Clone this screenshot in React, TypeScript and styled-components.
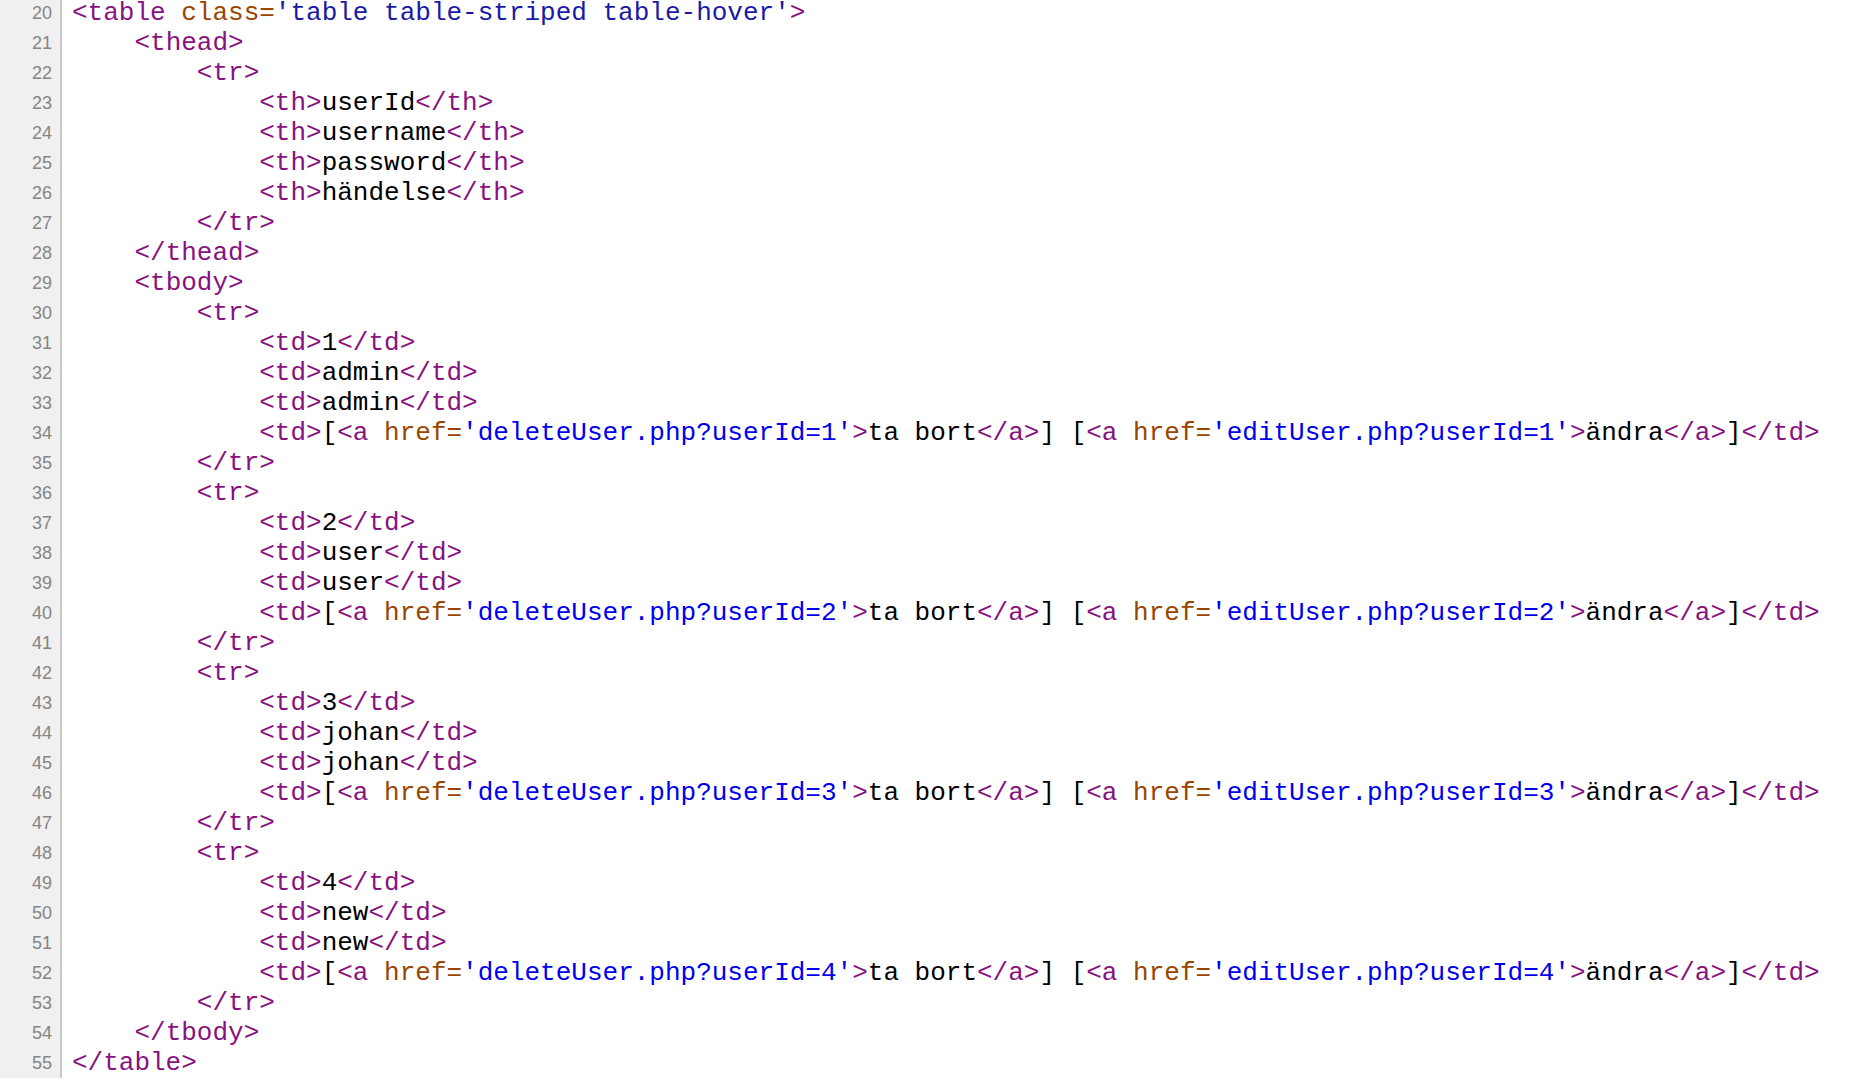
import React from "react";
import styled, { createGlobalStyle } from "styled-components";

const Global = createGlobalStyle`
  html, body { margin: 0; padding: 0; background: #ffffff; overflow: hidden; }
`;

const View = styled.div`
  display: flex;
  margin-top: -2px;
  min-height: 1100px;
`;

const Gutter = styled.div`
  width: 60px;
  flex: none;
  background: #f0f0f0;
  border-right: 2px solid #c9c9c9;
  display: flex;
  flex-direction: column;
`;

const LineNumber = styled.div`
  height: 30px;
  line-height: 30px;
  padding-right: 8px;
  text-align: right;
  font-family: "Liberation Sans", Arial, sans-serif;
  font-size: 18px;
  color: #858585;
`;

const Code = styled.div`
  flex: 1;
  display: flex;
  flex-direction: column;
  padding-left: 10px;
`;

const Line = styled.div`
  height: 30px;
  line-height: 30px;
  white-space: pre;
  font-family: "Liberation Mono", "Courier New", monospace;
  font-size: 26px;
  color: #000000;
`;

const Tag = styled.span`
  color: #881280;
`;
const AttrName = styled.span`
  color: #994500;
`;
const AttrValue = styled.span<{ $link?: boolean }>`
  color: ${(p) => (p.$link ? "#0000ee" : "#1a1aa6")};
`;

const rows = [
  "<table class='table table-striped table-hover'>",
  "    <thead>",
  "        <tr>",
  "            <th>userId</th>",
  "            <th>username</th>",
  "            <th>password</th>",
  "            <th>händelse</th>",
  "        </tr>",
  "    </thead>",
  "    <tbody>",
];
const users = [
  ["1", "admin"],
  ["2", "user"],
  ["3", "johan"],
  ["4", "new"],
];
users.forEach(([id, name]) => {
  rows.push("        <tr>");
  rows.push(`            <td>${id}</td>`);
  rows.push(`            <td>${name}</td>`);
  rows.push(`            <td>${name}</td>`);
  rows.push(
    `            <td>[<a href='deleteUser.php?userId=${id}'>ta bort</a>] [<a href='editUser.php?userId=${id}'>ändra</a>]</td>`
  );
  rows.push("        </tr>");
});
rows.push("    </tbody>");
rows.push("</table>");

function renderTag(tag: string, key: number) {
  const m = tag.match(/^<(\/?[a-z]+)(.*?)>$/);
  if (!m) return <Tag key={key}>{tag}</Tag>;
  const parts: React.ReactNode[] = [];
  parts.push(<Tag key="o">{"<" + m[1]}</Tag>);
  const re = /(\s+)([a-z]+=)('[^']*')/g;
  let a: RegExpExecArray | null;
  let i = 0;
  while ((a = re.exec(m[2]))) {
    const isHref = a[2] === "href=";
    parts.push(<span key={"s" + i}>{a[1]}</span>);
    parts.push(<AttrName key={"n" + i}>{a[2]}</AttrName>);
    parts.push(
      <AttrValue key={"v" + i} $link={isHref}>
        {a[3]}
      </AttrValue>
    );
    i++;
  }
  parts.push(<Tag key="c">{">"}</Tag>);
  return <React.Fragment key={key}>{parts}</React.Fragment>;
}

function renderLine(src: string) {
  const out: React.ReactNode[] = [];
  const re = /<[^>]+>/g;
  let last = 0;
  let m: RegExpExecArray | null;
  let k = 0;
  while ((m = re.exec(src))) {
    if (m.index > last) out.push(<span key={k++}>{src.slice(last, m.index)}</span>);
    out.push(renderTag(m[0], k++));
    last = m.index + m[0].length;
  }
  if (last < src.length) out.push(<span key={k++}>{src.slice(last)}</span>);
  return out;
}

export default function App() {
  return (
    <>
      <Global />
      <View>
        <Gutter>
          {rows.map((_, i) => (
            <LineNumber key={i}>{20 + i}</LineNumber>
          ))}
        </Gutter>
        <Code>
          {rows.map((r, i) => (
            <Line key={i}>{renderLine(r)}</Line>
          ))}
        </Code>
      </View>
    </>
  );
}
